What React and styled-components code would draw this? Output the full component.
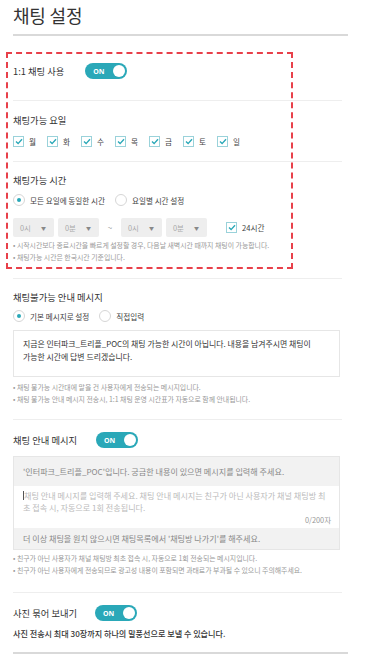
import React from "react";
import styled, { createGlobalStyle } from "styled-components";

const GlobalStyle = createGlobalStyle`
  html, body {
    margin: 0;
    padding: 0;
    background: #fff;
    overflow: hidden;
  }
  body {
    font-family: "Noto Sans CJK KR", "Noto Sans", sans-serif;
    color: #333;
  }
`;

const TEAL = "#2aa8b8";

const Page = styled.div`
  width: 366px;
  padding: 0 18px 0 13px;
  box-sizing: border-box;
`;

const Header = styled.div`
  height: 34px;
  border-bottom: 2px solid #d9d9d9;
  display: flex;
  align-items: flex-start;
`;

const Title = styled.h1`
  margin: 4px 0 0;
  font-size: 18px;
  line-height: 22px;
  font-weight: 400;
  color: #333;
  letter-spacing: -0.2px;
`;

const Annotated = styled.div`
  position: relative;
`;

const DashedFrame = styled.div`
  position: absolute;
  left: -7px;
  top: 16px;
  width: 287px;
  height: 217px;
  border: 2px dashed #e8404a;
  box-sizing: border-box;
  pointer-events: none;
`;

const Section = styled.div`
  padding: ${(p) => p.$pad};
  margin-right: 6px;
  border-bottom: ${(p) => (p.$last ? "none" : "1px solid #eeeeee")};
`;

const Row = styled.div`
  display: flex;
  align-items: center;
  height: ${(p) => p.$h || 16}px;
  margin-top: ${(p) => p.$mt || 0}px;
`;

const Label = styled.div`
  font-size: 9.3px;
  line-height: 14px;
  color: #333;
  white-space: nowrap;
`;

const ToggleWrap = styled.div`
  margin-left: ${(p) => p.$ml}px;
  width: 42px;
  height: 16px;
  border-radius: 8px;
  background: ${TEAL};
  display: flex;
  align-items: center;
  justify-content: space-between;
  padding: 0 2px 0 8px;
  box-sizing: border-box;
`;

const ToggleText = styled.span`
  color: #fff;
  font-family: "Noto Sans", sans-serif;
  font-size: 7px;
  font-weight: 700;
`;

const Knob = styled.span`
  width: 12px;
  height: 12px;
  border-radius: 50%;
  background: #fff;
`;

function Toggle({ ml }) {
  return (
    <ToggleWrap $ml={ml}>
      <ToggleText>ON</ToggleText>
      <Knob />
    </ToggleWrap>
  );
}

const Days = styled.div`
  display: grid;
  grid-template-columns: repeat(7, 34px);
  margin-top: 7px;
  height: 14px;
  align-items: center;
`;

const Check = styled.label`
  display: flex;
  align-items: center;
  font-size: 7.6px;
  color: #444;
  white-space: nowrap;
`;

const Box = styled.span`
  width: 11px;
  height: 11px;
  border: 1px solid #9ad2da;
  background: #fff;
  display: flex;
  align-items: center;
  justify-content: center;
  margin-right: ${(p) => p.$gap || 5}px;
  box-sizing: border-box;
`;

function CheckBox({ children, gap }) {
  return (
    <Check>
      <Box $gap={gap}>
        <svg width="8" height="7" viewBox="0 0 8 7">
          <path d="M1 3.6 L3.1 5.6 L7 1.2" fill="none" stroke={TEAL} strokeWidth="1.4" />
        </svg>
      </Box>
      {children}
    </Check>
  );
}

const Radios = styled.div`
  display: flex;
  align-items: center;
  height: 14px;
  margin-top: ${(p) => p.$mt}px;
`;

const RadioItem = styled.label`
  display: flex;
  align-items: center;
  font-size: 7.6px;
  color: #444;
  margin-right: 10px;
  white-space: nowrap;
`;

const Circle = styled.span`
  width: 12px;
  height: 12px;
  border-radius: 50%;
  border: 1px solid #d6d6d6;
  box-sizing: border-box;
  background: #fff;
  display: flex;
  align-items: center;
  justify-content: center;
  margin-right: 5px;

  &::after {
    content: "";
    display: ${(p) => (p.$on ? "block" : "none")};
    width: 4px;
    height: 4px;
    border-radius: 50%;
    background: ${TEAL};
  }
`;

function Radio({ on, children }) {
  return (
    <RadioItem>
      <Circle $on={on} />
      {children}
    </RadioItem>
  );
}

const TimeRow = styled.div`
  display: flex;
  align-items: center;
  margin-top: 11px;
  height: 19px;
`;

const Select = styled.div`
  width: 41px;
  height: 19px;
  background: #eeeeee;
  border-radius: 2px;
  margin-right: 4px;
  display: flex;
  align-items: center;
  justify-content: space-between;
  padding: 0 8px 0 7px;
  box-sizing: border-box;
  font-size: 7.4px;
  color: #aaa;
`;

const Arrow = styled.span`
  font-size: 5px;
  color: #888;
`;

const Tilde = styled.span`
  width: 14px;
  margin-right: 4px;
  text-align: center;
  font-size: 8px;
  color: #999;
`;

const FullDay = styled.div`
  margin-left: 15px;
  font-size: 8.2px;
  color: #333;
`;

const Notes = styled.ul`
  list-style: none;
  margin: ${(p) => p.$mt}px 0 0;
  padding: 0;
`;

const Note = styled.li`
  font-size: 6.9px;
  line-height: 12px;
  color: #999;
  white-space: nowrap;

  &::before {
    content: "• ";
  }
`;

const TextBox = styled.div`
  margin-top: 7px;
  margin-right: 2px;
  height: 47px;
  border: 1px solid #e6e6e6;
  box-sizing: border-box;
  padding: 6px 9px;
  font-size: 7.9px;
  line-height: 13px;
  color: #333;
  word-break: keep-all;
`;

const GuideBox = styled.div`
  margin-top: 8px;
  margin-right: 2px;
  border: 1px solid #e6e6e6;
  background: #f2f2f2;
`;

const Band = styled.div`
  height: ${(p) => p.$h}px;
  display: flex;
  align-items: center;
  padding: 0 9px;
  font-size: 8.1px;
  color: #888;
  white-space: nowrap;
`;

const Input = styled.div`
  background: #fff;
  padding: 4px 8px 2px 9px;
  font-size: 8.1px;
  line-height: 12px;
  color: #bbb;
  height: 42px;
  box-sizing: border-box;
  display: flex;
  flex-direction: column;
  word-break: break-all;
`;

const Caret = styled.span`
  display: inline-block;
  width: 1px;
  height: 9px;
  background: #555;
  vertical-align: -1px;
`;

const Counter = styled.div`
  margin-top: auto;
  text-align: right;
  font-size: 7.4px;
  color: #999;
`;

const Desc = styled.div`
  margin-top: 7px;
  font-size: 8.1px;
  line-height: 12px;
  color: #333;
  font-weight: 500;
  white-space: nowrap;
`;

const BottomLine = styled.div`
  border-top: 2px solid #d9d9d9;
`;

const days = ["월", "화", "수", "목", "금", "토", "일"];

export default function App() {
  return (
    <Page>
      <GlobalStyle />
      <Header>
        <Title>채팅 설정</Title>
      </Header>

      <Annotated>
        <Section $pad="27px 0 21px">
          <Row>
            <Label>1:1 채팅 사용</Label>
            <Toggle ml={21} />
          </Row>
        </Section>

        <Section $pad="12px 0 13px">
          <Label>채팅가능 요일</Label>
          <Days>
            {days.map((d) => (
              <CheckBox key={d}>{d}</CheckBox>
            ))}
          </Days>
        </Section>

        <Section $pad="11px 0 15px">
          <Label>채팅가능 시간</Label>
          <Radios $mt={6}>
            <Radio on>모든 요일에 동일한 시간</Radio>
            <Radio>요일별 시간 설정</Radio>
          </Radios>
          <TimeRow>
            <Select>0시<Arrow>▼</Arrow></Select>
            <Select>0분<Arrow>▼</Arrow></Select>
            <Tilde>~</Tilde>
            <Select>0시<Arrow>▼</Arrow></Select>
            <Select>0분<Arrow>▼</Arrow></Select>
            <FullDay>
              <CheckBox gap={5}>24시간</CheckBox>
            </FullDay>
          </TimeRow>
          <Notes $mt={2}>
            <Note>시작시간보다 종료시간을 빠르게 설정할 경우, 다음날 새벽시간 때까지 채팅이 가능합니다.</Note>
            <Note>채팅가능 시간은 한국시간 기준입니다.</Note>
          </Notes>
        </Section>

        <DashedFrame />
      </Annotated>

      <Section $pad="11px 0 14px">
        <Label>채팅불가능 안내 메시지</Label>
        <Radios $mt={5}>
          <Radio on>기본 메시지로 설정</Radio>
          <Radio>직접입력</Radio>
        </Radios>
        <TextBox>
          지금은 인터파크_트리플_POC의 채팅 가능한 시간이 아닙니다. 내용을 남겨주시면 채팅이 가능한 시간에 답변 드리겠습니다.
        </TextBox>
        <Notes $mt={4}>
          <Note>채팅 불가능 시간대에 말을 건 사용자에게 전송되는 메시지입니다.</Note>
          <Note>채팅 불가능 안내 메시지 전송시, 1:1 채팅 운영 시간표가 자동으로 함께 안내됩니다.</Note>
        </Notes>
      </Section>

      <Section $pad="12px 0 16px">
        <Row>
          <Label>채팅 안내 메시지</Label>
          <Toggle ml={19} />
        </Row>
        <GuideBox>
          <Band $h={29}>'인터파크_트리플_POC'입니다. 궁금한 내용이 있으면 메시지를 입력해 주세요.</Band>
          <Input>
            <div>
              <Caret />채팅 안내 메시지를 입력해 주세요. 채팅 안내 메시지는 친구가 아닌 사용자가 채널 채팅방 최초 접속 시, 자동으로 1회 전송됩니다.
            </div>
            <Counter>0/200자</Counter>
          </Input>
          <Band $h={21}>더 이상 채팅을 원치 않으시면 채팅목록에서 '채팅방 나가기'를 해주세요.</Band>
        </GuideBox>
        <Notes $mt={2}>
          <Note>친구가 아닌 사용자가 채널 채팅방 최초 접속 시, 자동으로 1회 전송되는 메시지입니다.</Note>
          <Note>친구가 아닌 사용자에게 전송되므로 광고성 내용이 포함되면 과태료가 부과될 수 있으니 주의해주세요.</Note>
        </Notes>
      </Section>

      <Section $pad="12px 0 12px" $last>
        <Row>
          <Label>사진 묶어 보내기</Label>
          <Toggle ml={18} />
        </Row>
        <Desc>사진 전송시 최대 30장까지 하나의 말풍선으로 보낼 수 있습니다.</Desc>
      </Section>
      <BottomLine />
    </Page>
  );
}
